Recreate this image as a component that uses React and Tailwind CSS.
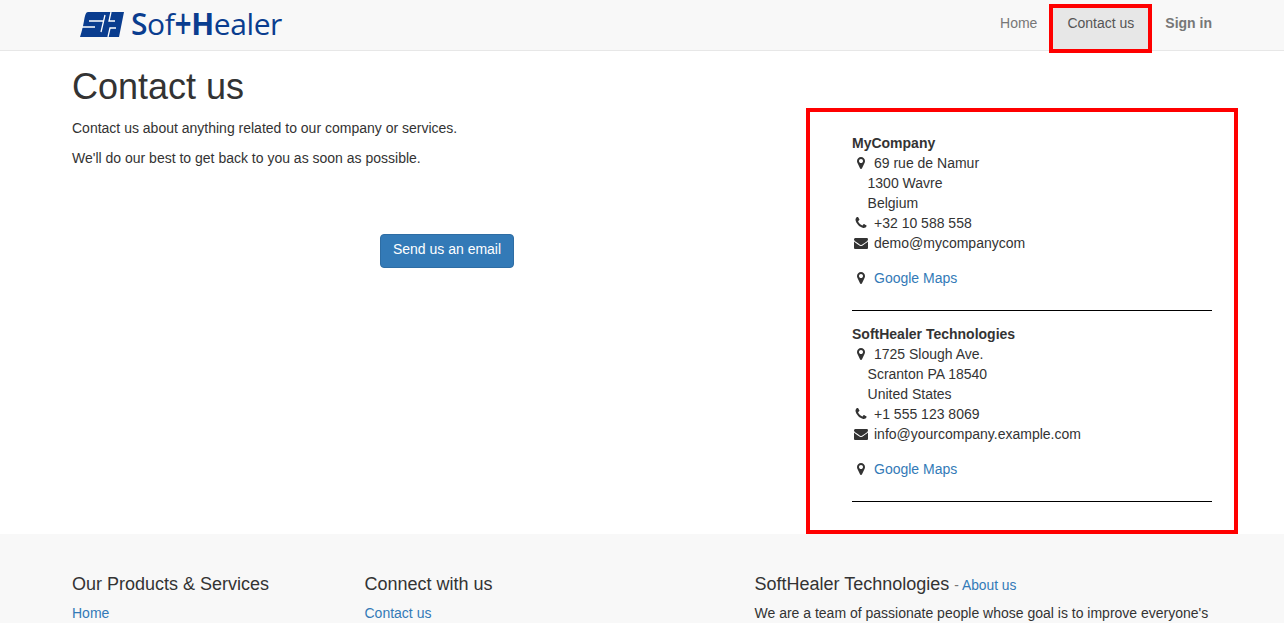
import React from 'react';

const font = { fontFamily: '"Liberation Sans", Arial, sans-serif' };

function PinIcon() {
    return (
        <svg viewBox="0 0 1792 1792" className="w-[14px] h-[14px]" fill="currentColor">
            <path d="M1152 640q0-106-75-181t-181-75-181 75-75 181 75 181 181 75 181-75 75-181zm256 0q0 109-33 179l-364 774q-16 33-47.500 52t-67.500 19-67.500-19-46.500-52l-365-774q-33-70-33-179 0-212 150-362t362-150 362 150 150 362z" />
        </svg>
    );
}

function PhoneIcon() {
    return (
        <svg viewBox="0 0 1792 1792" className="w-[14px] h-[14px]" fill="currentColor">
            <path d="M1600 1240q0 27-10 70.500t-21 68.500q-21 50-122 106-94 51-186 51-27 0-53-3.500t-57.500-12.500-47-14.500-55.500-20.500-49-18q-98-35-175-83-127-79-264-216t-216-264q-48-77-83-175-3-9-18-49t-20.500-55.500-14.500-47-12.500-57.500-3.500-53q0-92 51-186 56-101 106-122 25-11 68.500-21t70.500-10q14 0 21 3 18 6 53 76 11 19 30 54t35 63.500 31 53.500q3 4 17.500 25t21.500 35.500 7 28.500q0 20-28.500 50t-62 55-62 53-28.500 46q0 9 5 22.500t8.500 20.500 14 24 11.500 19q76 137 174 235t235 174q2 1 19 11.500t24 14 20.500 8.500 22.500 5q18 0 46-28.500t53-62 55-62 50-28.500q14 0 28.500 7t35.500 21.500 25 17.500q25 15 53.500 31t63.500 35 54 30q70 35 76 53 3 7 3 21z" />
        </svg>
    );
}

function MailIcon() {
    return (
        <svg viewBox="0 0 1792 1792" className="w-[14px] h-[14px]" fill="currentColor">
            <path d="M1792 710v794q0 66-47 113t-113 47h-1472q-66 0-113-47t-47-113v-794q44 49 101 87 362 246 497 345 57 42 92.500 65.500t94.500 48 110 24.500h2q51 0 110-24.500t94.500-48 92.500-65.500q170-123 498-345 57-39 100-87zm0-294q0 79-49 151t-122 123q-376 261-468 325-10 7-42.500 30.500t-54 38-52 32.500-57.500 27-50 9h-2q-23 0-50-9t-57.500-27-52-32.500-54-38-42.500-30.500q-91-64-262-182.500t-205-142.500q-62-42-117-115.500t-55-136.500q0-78 41.500-130t118.500-52h1472q65 0 112.500 47t47.500 113z" />
        </svg>
    );
}

function Logo() {
    return (
        <div className="flex items-center gap-[6px] ml-[23px] mt-[10px] h-[28px] text-[#0a3d8f]">
            <svg width="45" height="25" viewBox="0 0 45 25">
                <path fill="#0a3d8f" d="M8 0 H44 L39 25 H0 L1.500 20 L3 14 L4 9 C5 3 6 0 8 0 Z" />
                <path fill="none" stroke="#ffffff" strokeWidth="1.3" d="M2 15 H15 M9 9 H23 M25 3 L21 20 M31 0 L29 9 H35 M28 25 L30 16 H36" />
            </svg>
            <div className="flex items-baseline text-[30px] leading-[28px] tracking-[-0.4px]" style={{ fontFamily: '"Open Sans", sans-serif' }}>
                <span className="font-semibold">S</span>
                <span>of</span>
                <span className="inline-block font-semibold scale-y-[1.4]">+</span>
                <span className="font-bold">H</span>
                <span>ealer</span>
            </div>
        </div>
    );
}

function Navbar() {
    return (
        <nav className="h-[51px] bg-[#f8f8f8] border-b border-[#e7e7e7] flex justify-between px-[57px]">
            <Logo />
            <ul className="flex items-start text-[#777]">
                <li className="pl-[15px] pr-[11.5px] pt-[13px] leading-5">Home</li>
                <li className="mt-[4px] h-[49px] pl-[14.5px] pr-[14px] pt-[5px] leading-5 border-4 border-[#ff0000] bg-[#e7e7e7] text-[#555]">Contact us</li>
                <li className="pl-[13px] pr-[15px] pt-[13px] leading-5 font-bold">Sign in</li>
            </ul>
        </nav>
    );
}

function Office({ name, lines, phone, email }) {
    return (
        <div>
            <div className="font-bold">{name}</div>
            <div className="flex items-center">
                <span className="w-[22px] flex justify-center pr-[4px]"><PinIcon /></span>
                {lines[0]}
            </div>
            <div className="pl-[15.56px]">{lines[1]}</div>
            <div className="pl-[15.56px]">{lines[2]}</div>
            <div className="flex items-center">
                <span className="w-[22px] flex justify-center pr-[4px]"><PhoneIcon /></span>
                {phone}
            </div>
            <div className="flex items-center">
                <span className="w-[22px] flex justify-center pr-[4px]"><MailIcon /></span>
                {email}
            </div>
            <div className="flex items-center mt-[15px]">
                <span className="w-[22px] flex justify-center pr-[4px]"><PinIcon /></span>
                <a className="text-[#337ab7]">Google Maps</a>
            </div>
            <hr className="mt-[22px] mb-[13px] border-t border-black" />
        </div>
    );
}

export default function App() {
    return (
        <div className="h-[623px] overflow-hidden bg-white text-[14px] leading-5 text-[#333]" style={font}>
            <Navbar />
            <main className="grid grid-cols-[734px_432px] pl-[72px]">
                <div>
                    <h1 className="mt-[16px] mb-[11px] text-[36px] leading-[39.6px] font-medium">Contact us</h1>
                    <p className="mb-[10px]">Contact us about anything related to our company or services.</p>
                    <p>We'll do our best to get back to you as soon as possible.</p>
                    <div className="flex justify-center pl-4 mt-[66px]">
                        <button className="h-[34px] px-[12px] pb-[3px] rounded-[4px] bg-[#337ab7] border border-[#2e6da4] text-white">Send us an email</button>
                    </div>
                </div>
                <aside className="mt-[57px] h-[426px] border-4 border-[#ff0000] pl-[42px] pr-[22px] pt-[21px]">
                    <Office name="MyCompany" lines={['69 rue de Namur', '1300 Wavre', 'Belgium']} phone="+32 10 588 558" email="demo@mycompanycom" />
                    <Office name="SoftHealer Technologies" lines={['1725 Slough Ave.', 'Scranton PA 18540', 'United States']} phone="+1 555 123 8069" email="info@yourcompany.example.com" />
                </aside>
            </main>
            <footer className="bg-[#f8f8f8] grid grid-cols-[292.5px_390px_472px] pl-[72px] pt-[40px]">
                <div>
                    <h4 className="text-[18px] leading-5 font-medium mb-[9px]">Our Products &amp; Services</h4>
                    <a className="text-[#337ab7]">Home</a>
                </div>
                <div>
                    <h4 className="text-[18px] leading-5 font-medium mb-[9px]">Connect with us</h4>
                    <a className="text-[#337ab7]">Contact us</a>
                </div>
                <div>
                    <h4 className="h-5 text-[18px] leading-5 font-medium mb-[9px]">
                        SoftHealer Technologies <small className="text-[13.8px] leading-none font-normal text-[#777]">- <a className="text-[#337ab7]">About us</a></small>
                    </h4>
                    <p>We are a team of passionate people whose goal is to improve everyone's life through disruptive products.</p>
                </div>
            </footer>
        </div>
    );
}
